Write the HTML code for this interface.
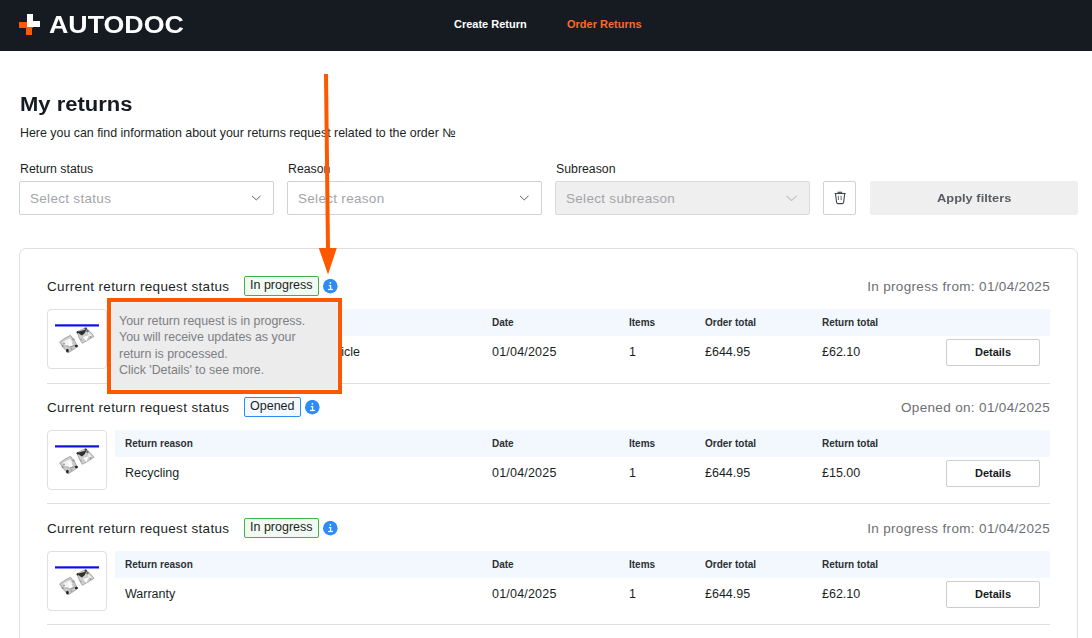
<!DOCTYPE html>
<html><head><meta charset="utf-8">
<style>
*{margin:0;padding:0;box-sizing:border-box}
html,body{width:1092px;height:638px;overflow:hidden;background:#fff}
body{position:relative;font-family:"Liberation Sans",sans-serif;color:#1b1f24}
.a{position:absolute;white-space:nowrap}
#hdr{position:absolute;left:0;top:0;width:1092px;height:51px;background:#151b21}
.sel{position:absolute;top:181px;height:34px;border:1px solid #cfd1d3;border-radius:2px;background:#fff}
.sel.dis{background:#efefef;border-color:#dadada}
.ph{position:absolute;left:10px;top:9px;font-size:13.5px;letter-spacing:0.3px;color:#a2a5a9}
.chev{position:absolute;right:12px;top:13px}
.lbl{font-size:12.3px;color:#1b1f24}
.card{position:absolute;left:19px;top:248px;width:1059px;height:420px;border:1px solid #dedfe0;border-radius:7px;background:#fff}
.st{font-size:13.5px;letter-spacing:0.34px;color:#1b1f24}
.badge{position:absolute;height:20px;border:1px solid #3cb44b;background:#f1f9f1;border-radius:2px;font-size:12.5px;color:#1b1f24}
.badge.blue{border-color:#2e8cf0;background:#f3f8fe}
.info{position:absolute;width:15px;height:15px}
.date{font-size:13.5px;letter-spacing:0.34px;color:#6c6f73}
.thumb{position:absolute;left:47px;width:60px;height:60px;border:1px solid #dedfe0;border-radius:4px;background:#fff;overflow:hidden}
.th{position:absolute;left:115px;width:935px;height:27px;background:#f2f8fd}
.hl{font-size:10px;font-weight:bold;color:#2c3035}
.val{font-size:12.5px;color:#1b1f24}
.btn{position:absolute;left:946px;width:94px;height:27px;border:1px solid #cbcecd;border-radius:2px;background:#fff;font-size:11px;font-weight:bold;color:#161b21;text-align:center;line-height:24px}
.div{position:absolute;left:47px;width:1003px;height:1px;background:#dfdfdf}
</style></head>
<body>
<div id="hdr"></div>
<!-- logo -->
<svg class="a" style="left:0;top:0" width="48" height="51" viewBox="0 0 48 51">
  <rect x="19" y="22" width="14" height="6" fill="#ff5a00"/>
  <rect x="26" y="22" width="6" height="13" fill="#ff5a00"/>
  <rect x="27" y="14" width="6" height="13" fill="#fff"/>
  <rect x="27" y="21" width="13" height="6" fill="#fff"/>
</svg>
<div id="logo" class="a" style="left:49px;top:11px;font-size:24px;font-weight:bold;color:#fff;transform:scaleX(1.115);transform-origin:0 0">AUTODOC</div>
<div id="nav1" class="a" style="left:454px;top:18px;font-size:11px;font-weight:bold;color:#fff">Create Return</div>
<div id="nav2" class="a" style="left:567px;top:18px;font-size:11px;font-weight:bold;color:#fb6a2c">Order Returns</div>

<div id="h1" class="a" style="left:20px;top:92.5px;font-size:20px;font-weight:bold;color:#161b21;transform:scaleX(1.1);transform-origin:0 0">My returns</div>
<div id="sub" class="a" style="left:20px;top:125.6px;font-size:12.4px;color:#1b1f24">Here you can find information about your returns request related to the order №</div>

<div id="l1" class="a lbl" style="left:20px;top:162px">Return status</div>
<div id="l2" class="a lbl" style="left:288px;top:162px">Reason</div>
<div id="l3" class="a lbl" style="left:556px;top:162px">Subreason</div>

<div class="sel" style="left:19px;width:255px"><span id="p1" class="ph">Select status</span>
 <svg class="chev" width="11" height="7" viewBox="0 0 11 7"><path d="M2 0.9 L6.25 4.9 L10.5 0.9" fill="none" stroke="#5a5f64" stroke-width="1"/></svg></div>
<div class="sel" style="left:287px;width:255px"><span id="p2" class="ph">Select reason</span>
 <svg class="chev" width="11" height="7" viewBox="0 0 11 7"><path d="M2 0.9 L6.25 4.9 L10.5 0.9" fill="none" stroke="#5a5f64" stroke-width="1"/></svg></div>
<div class="sel dis" style="left:555px;width:255px"><span id="p3" class="ph">Select subreason</span>
 <svg class="chev" width="11" height="7" viewBox="0 0 11 7"><path d="M0.5 0.8 L5.5 5.6 L10.5 0.8" fill="none" stroke="#bcbfc2" stroke-width="1.1"/></svg></div>
<div class="sel" style="left:823px;width:33px">
 <svg class="a" style="left:10px;top:9px" width="13" height="14" viewBox="0 0 13 14">
  <path d="M0.6 2.5 H11.6" stroke="#43484d" stroke-width="1.1" fill="none"/>
  <path d="M3.6 1.3 H8.2" stroke="#43484d" stroke-width="1.2" fill="none"/>
  <path d="M1.5 2.6 L2.6 11.4 Q2.8 12.6 4 12.6 H8.2 Q9.4 12.6 9.6 11.4 L10.7 2.6" stroke="#43484d" stroke-width="1.1" fill="none"/>
  <path d="M4.4 4.8 V9 M7.1 4.8 V9" stroke="#555a5f" stroke-width="0.9" fill="none"/>
 </svg>
</div>
<div class="a" style="left:870px;top:181px;width:208px;height:34px;background:#efefef;border-radius:2px"></div>
<div id="apply" class="a" style="left:937px;top:191.5px;font-size:11.5px;transform:scaleX(1.12);transform-origin:0 0;font-weight:bold;color:#5a5e63">Apply filters</div>

<div class="card"></div>

<!-- block 1 -->
<div id="s1" class="a st" style="left:47px;top:278.5px">Current return request status</div>
<div class="badge" style="left:244px;top:276px;width:75px"><span id="b1" class="a" style="left:5px;top:1.2px">In progress</span></div>
<div class="info" style="left:323px;top:279px"><svg width="15" height="15" viewBox="0 0 15 15" style="position:absolute;left:0;top:0"><circle cx="7.3" cy="7.2" r="7.3" fill="#2d8cf5"/><rect x="6.7" y="3.1" width="1.4" height="1.6" fill="#fff"/><rect x="6.9" y="6" width="1.3" height="4.3" fill="#fff"/><rect x="5.8" y="6" width="2.3" height="1.2" fill="#fff"/><rect x="5" y="9.9" width="4.9" height="1.2" fill="#fff"/></svg></div>
<div id="d1" class="a date" style="right:42px;top:278.5px">In progress from: 01/04/2025</div>
<div class="thumb" style="top:309px"><svg width="58" height="58" viewBox="0 0 58 58" style="position:absolute;left:0;top:0">
<filter id="sf1"><feGaussianBlur stdDeviation="0.45"/></filter>
<rect x="7" y="14.3" width="44" height="2.2" fill="#0c10f0"/>
<path d="M13 15.4 H50" stroke="#1a1a90" stroke-width="0.9" stroke-dasharray="1.4 1.6" opacity="0.75"/>
<g filter="url(#sf1)">
<path d="M22.5 25.3 Q16.5 28 11.7 31.9 Q14.8 38 20.2 42.7 Q25.2 39.8 29.6 36.6 Q27 30 22.5 25.3 Z" fill="#cacaca" stroke="#a0a0a0" stroke-width="0.9"/>
<path d="M37.6 17.8 Q33 19.6 29.1 22 Q30.8 28.5 34.3 33.3 Q40.5 30 46 26.3 Q42.5 21.5 37.6 17.8 Z" fill="#cecece" stroke="#a4a4a4" stroke-width="0.9"/>
<path d="M14.5 32 Q18.5 29.5 22 28 L24.5 31.5 L21.5 35.5 L17 36.5 Z" fill="#f2f2f2"/>
<path d="M20.5 29.5 L25 34.5 L21 37.5 Z" fill="#fff"/>
<path d="M22 37 Q25 36.5 27.5 35" stroke="#9a9a9a" stroke-width="1.2" fill="none"/>
<path d="M35 27 L40.5 25.5 L38.5 31 Z" fill="#fff"/>
<path d="M40 22 L44 25.5 L40.5 27 Z" fill="#eee"/>
<path d="M30 21.8 Q34 20.2 38.3 19.8 Q37.5 23.5 34 25.5 Q31.2 24.8 30 21.8 Z" fill="#2e2e2e"/>
<circle cx="37.8" cy="18.8" r="1.3" fill="#444"/>
<circle cx="29.8" cy="22.3" r="1.2" fill="#333"/>
<ellipse cx="19.4" cy="40.6" rx="1.4" ry="1.9" fill="#2a2a2a"/>
<ellipse cx="28.4" cy="36" rx="1.5" ry="1.3" fill="#2a2a2a"/>
<path d="M15 36.5 Q19 34.5 23 38" stroke="#b4b4b4" stroke-width="1.2" fill="none"/>
<circle cx="16" cy="33.5" r="1" fill="#9a9a9a"/><circle cx="25.5" cy="29.5" r="1.1" fill="#8c8c8c"/><circle cx="23.5" cy="39" r="1" fill="#a0a0a0"/><circle cx="14.5" cy="36" r="0.9" fill="#8a8a8a"/><circle cx="42.5" cy="27" r="1" fill="#9a9a9a"/><circle cx="33" cy="29.5" r="1" fill="#a4a4a4"/><circle cx="39.5" cy="21" r="1.2" fill="#6a6a6a"/>
</g>
</svg></div>
<div class="th" style="top:309px"></div>
<div id="hr1" class="a hl" style="left:125px;top:316.6px">Return reason</div>
<div class="a hl" style="left:492px;top:316.6px">Date</div>
<div class="a hl" style="left:629px;top:316.6px">Items</div>
<div class="a hl" style="left:705px;top:316.6px">Order total</div>
<div class="a hl" style="left:822px;top:316.6px">Return total</div>
<div id="v1" class="a val" style="right:732px;top:344.5px">Received a damaged or faulty article</div>
<div class="a val" style="left:492px;top:344.5px;letter-spacing:0.2px">01/04/2025</div>
<div class="a val" style="left:629px;top:344.5px">1</div>
<div class="a val" style="left:705px;top:344.5px">£644.95</div>
<div class="a val" style="left:822px;top:344.5px">£62.10</div>
<div class="btn" style="top:339px">Details</div>
<div class="div" style="top:383px"></div>

<!-- block 2 -->
<div class="a st" style="left:47px;top:399.5px">Current return request status</div>
<div class="badge blue" style="left:244px;top:397px;width:57px"><span class="a" style="left:5px;top:1.2px">Opened</span></div>
<div class="info" style="left:305px;top:400px"><svg width="15" height="15" viewBox="0 0 15 15" style="position:absolute;left:0;top:0"><circle cx="7.3" cy="7.2" r="7.3" fill="#2d8cf5"/><rect x="6.7" y="3.1" width="1.4" height="1.6" fill="#fff"/><rect x="6.9" y="6" width="1.3" height="4.3" fill="#fff"/><rect x="5.8" y="6" width="2.3" height="1.2" fill="#fff"/><rect x="5" y="9.9" width="4.9" height="1.2" fill="#fff"/></svg></div>
<div class="a date" style="right:42px;top:399.5px">Opened on: 01/04/2025</div>
<div class="thumb" style="top:430px"><svg width="58" height="58" viewBox="0 0 58 58" style="position:absolute;left:0;top:0">
<filter id="sf2"><feGaussianBlur stdDeviation="0.45"/></filter>
<rect x="7" y="14.3" width="44" height="2.2" fill="#0c10f0"/>
<path d="M13 15.4 H50" stroke="#1a1a90" stroke-width="0.9" stroke-dasharray="1.4 1.6" opacity="0.75"/>
<g filter="url(#sf2)">
<path d="M22.5 25.3 Q16.5 28 11.7 31.9 Q14.8 38 20.2 42.7 Q25.2 39.8 29.6 36.6 Q27 30 22.5 25.3 Z" fill="#cacaca" stroke="#a0a0a0" stroke-width="0.9"/>
<path d="M37.6 17.8 Q33 19.6 29.1 22 Q30.8 28.5 34.3 33.3 Q40.5 30 46 26.3 Q42.5 21.5 37.6 17.8 Z" fill="#cecece" stroke="#a4a4a4" stroke-width="0.9"/>
<path d="M14.5 32 Q18.5 29.5 22 28 L24.5 31.5 L21.5 35.5 L17 36.5 Z" fill="#f2f2f2"/>
<path d="M20.5 29.5 L25 34.5 L21 37.5 Z" fill="#fff"/>
<path d="M22 37 Q25 36.5 27.5 35" stroke="#9a9a9a" stroke-width="1.2" fill="none"/>
<path d="M35 27 L40.5 25.5 L38.5 31 Z" fill="#fff"/>
<path d="M40 22 L44 25.5 L40.5 27 Z" fill="#eee"/>
<path d="M30 21.8 Q34 20.2 38.3 19.8 Q37.5 23.5 34 25.5 Q31.2 24.8 30 21.8 Z" fill="#2e2e2e"/>
<circle cx="37.8" cy="18.8" r="1.3" fill="#444"/>
<circle cx="29.8" cy="22.3" r="1.2" fill="#333"/>
<ellipse cx="19.4" cy="40.6" rx="1.4" ry="1.9" fill="#2a2a2a"/>
<ellipse cx="28.4" cy="36" rx="1.5" ry="1.3" fill="#2a2a2a"/>
<path d="M15 36.5 Q19 34.5 23 38" stroke="#b4b4b4" stroke-width="1.2" fill="none"/>
<circle cx="16" cy="33.5" r="1" fill="#9a9a9a"/><circle cx="25.5" cy="29.5" r="1.1" fill="#8c8c8c"/><circle cx="23.5" cy="39" r="1" fill="#a0a0a0"/><circle cx="14.5" cy="36" r="0.9" fill="#8a8a8a"/><circle cx="42.5" cy="27" r="1" fill="#9a9a9a"/><circle cx="33" cy="29.5" r="1" fill="#a4a4a4"/><circle cx="39.5" cy="21" r="1.2" fill="#6a6a6a"/>
</g>
</svg></div>
<div class="th" style="top:430px"></div>
<div class="a hl" style="left:125px;top:437.6px">Return reason</div>
<div class="a hl" style="left:492px;top:437.6px">Date</div>
<div class="a hl" style="left:629px;top:437.6px">Items</div>
<div class="a hl" style="left:705px;top:437.6px">Order total</div>
<div class="a hl" style="left:822px;top:437.6px">Return total</div>
<div class="a val" style="left:125px;top:465.5px">Recycling</div>
<div class="a val" style="left:492px;top:465.5px;letter-spacing:0.2px">01/04/2025</div>
<div class="a val" style="left:629px;top:465.5px">1</div>
<div class="a val" style="left:705px;top:465.5px">£644.95</div>
<div class="a val" style="left:822px;top:465.5px">£15.00</div>
<div class="btn" style="top:460px">Details</div>
<div class="div" style="top:503px"></div>

<!-- block 3 -->
<div class="a st" style="left:47px;top:520.5px">Current return request status</div>
<div class="badge" style="left:244px;top:518px;width:75px"><span class="a" style="left:5px;top:1.2px">In progress</span></div>
<div class="info" style="left:323px;top:521px"><svg width="15" height="15" viewBox="0 0 15 15" style="position:absolute;left:0;top:0"><circle cx="7.3" cy="7.2" r="7.3" fill="#2d8cf5"/><rect x="6.7" y="3.1" width="1.4" height="1.6" fill="#fff"/><rect x="6.9" y="6" width="1.3" height="4.3" fill="#fff"/><rect x="5.8" y="6" width="2.3" height="1.2" fill="#fff"/><rect x="5" y="9.9" width="4.9" height="1.2" fill="#fff"/></svg></div>
<div class="a date" style="right:42px;top:520.5px">In progress from: 01/04/2025</div>
<div class="thumb" style="top:551px"><svg width="58" height="58" viewBox="0 0 58 58" style="position:absolute;left:0;top:0">
<filter id="sf3"><feGaussianBlur stdDeviation="0.45"/></filter>
<rect x="7" y="14.3" width="44" height="2.2" fill="#0c10f0"/>
<path d="M13 15.4 H50" stroke="#1a1a90" stroke-width="0.9" stroke-dasharray="1.4 1.6" opacity="0.75"/>
<g filter="url(#sf3)">
<path d="M22.5 25.3 Q16.5 28 11.7 31.9 Q14.8 38 20.2 42.7 Q25.2 39.8 29.6 36.6 Q27 30 22.5 25.3 Z" fill="#cacaca" stroke="#a0a0a0" stroke-width="0.9"/>
<path d="M37.6 17.8 Q33 19.6 29.1 22 Q30.8 28.5 34.3 33.3 Q40.5 30 46 26.3 Q42.5 21.5 37.6 17.8 Z" fill="#cecece" stroke="#a4a4a4" stroke-width="0.9"/>
<path d="M14.5 32 Q18.5 29.5 22 28 L24.5 31.5 L21.5 35.5 L17 36.5 Z" fill="#f2f2f2"/>
<path d="M20.5 29.5 L25 34.5 L21 37.5 Z" fill="#fff"/>
<path d="M22 37 Q25 36.5 27.5 35" stroke="#9a9a9a" stroke-width="1.2" fill="none"/>
<path d="M35 27 L40.5 25.5 L38.5 31 Z" fill="#fff"/>
<path d="M40 22 L44 25.5 L40.5 27 Z" fill="#eee"/>
<path d="M30 21.8 Q34 20.2 38.3 19.8 Q37.5 23.5 34 25.5 Q31.2 24.8 30 21.8 Z" fill="#2e2e2e"/>
<circle cx="37.8" cy="18.8" r="1.3" fill="#444"/>
<circle cx="29.8" cy="22.3" r="1.2" fill="#333"/>
<ellipse cx="19.4" cy="40.6" rx="1.4" ry="1.9" fill="#2a2a2a"/>
<ellipse cx="28.4" cy="36" rx="1.5" ry="1.3" fill="#2a2a2a"/>
<path d="M15 36.5 Q19 34.5 23 38" stroke="#b4b4b4" stroke-width="1.2" fill="none"/>
<circle cx="16" cy="33.5" r="1" fill="#9a9a9a"/><circle cx="25.5" cy="29.5" r="1.1" fill="#8c8c8c"/><circle cx="23.5" cy="39" r="1" fill="#a0a0a0"/><circle cx="14.5" cy="36" r="0.9" fill="#8a8a8a"/><circle cx="42.5" cy="27" r="1" fill="#9a9a9a"/><circle cx="33" cy="29.5" r="1" fill="#a4a4a4"/><circle cx="39.5" cy="21" r="1.2" fill="#6a6a6a"/>
</g>
</svg></div>
<div class="th" style="top:551px"></div>
<div class="a hl" style="left:125px;top:558.6px">Return reason</div>
<div class="a hl" style="left:492px;top:558.6px">Date</div>
<div class="a hl" style="left:629px;top:558.6px">Items</div>
<div class="a hl" style="left:705px;top:558.6px">Order total</div>
<div class="a hl" style="left:822px;top:558.6px">Return total</div>
<div class="a val" style="left:125px;top:586.5px">Warranty</div>
<div class="a val" style="left:492px;top:586.5px;letter-spacing:0.2px">01/04/2025</div>
<div class="a val" style="left:629px;top:586.5px">1</div>
<div class="a val" style="left:705px;top:586.5px">£644.95</div>
<div class="a val" style="left:822px;top:586.5px">£62.10</div>
<div class="btn" style="top:581px">Details</div>
<div class="div" style="top:624px"></div>

<!-- tooltip -->
<div class="a" style="left:107px;top:298px;width:235px;height:96px;border:4px solid #fe5700;background:#ececec"><div class="a" style="left:0;top:0;right:0;bottom:0;border:1px solid #f3f7fb"></div></div>
<div id="tt" class="a" style="left:119px;top:312.5px;font-size:12.4px;line-height:16.57px;color:#7c7f83">Your return request is in progress.<br>You will receive updates as your<br>return is processed.<br>Click 'Details' to see more.</div>

<!-- arrow -->
<svg class="a" style="left:0;top:0" width="1092" height="638" viewBox="0 0 1092 638">
  <path d="M326 74 L328 250" stroke="#fe5700" stroke-width="4" fill="none"/>
  <path d="M318.8 248 L336.8 248 L328 274.5 Z" fill="#fe5700"/>
</svg>
</body></html>
